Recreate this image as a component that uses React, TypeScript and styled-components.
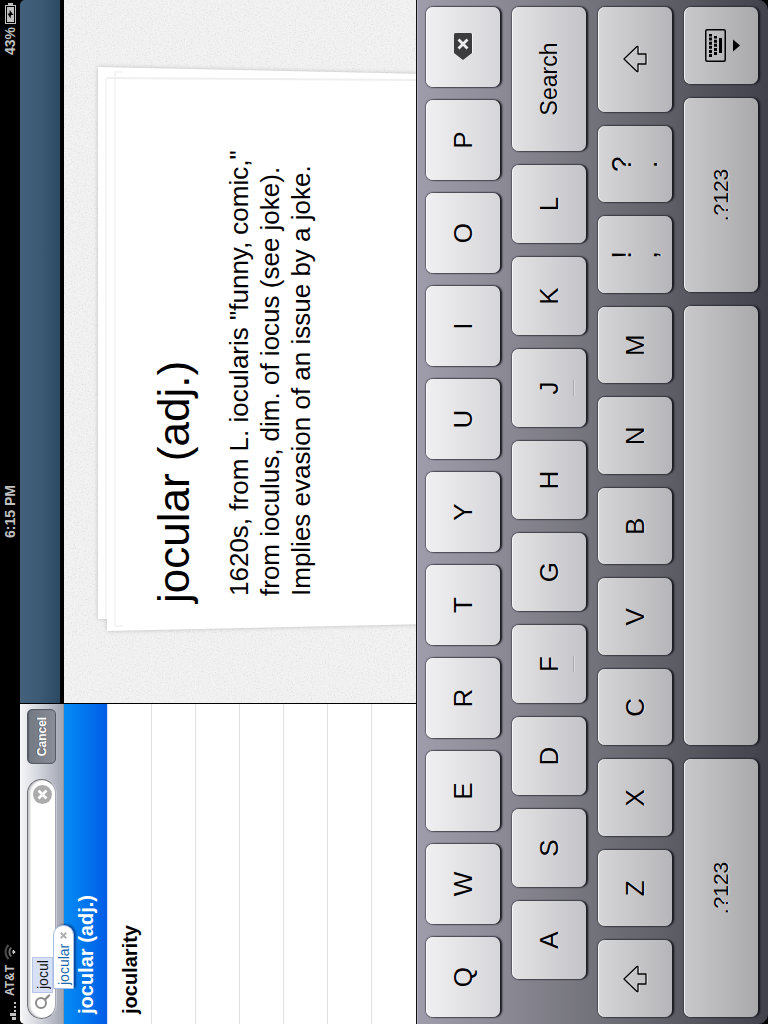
import React from "react";
import styled, { createGlobalStyle, css } from "styled-components";

const GlobalStyle = createGlobalStyle`
  *, *::before, *::after { box-sizing: border-box; }
  body {
    margin: 0;
    background: #000;
    font-family: "Liberation Sans", Arial, Helvetica, sans-serif;
  }
  button, input { font: inherit; border: 0; padding: 0; margin: 0; }
  h1, p, ul { margin: 0; padding: 0; font-weight: normal; }
`;

const Stage = styled.div`
  width: 100%;
  height: 100vh;
  overflow: hidden;
`;

/* A landscape device held on its side: the whole screen is turned a quarter. */
const Device = styled.div`
  display: flex;
  flex-direction: column;
  width: 100vh;
  height: 100vw;
  background: #000;
  transform-origin: 0 0;
  transform: translateY(100vh) rotate(-90deg);
`;

const StatusBar = styled.header`
  display: grid;
  grid-template-columns: 1fr auto 1fr;
  align-items: center;
  height: 20px;
  padding: 0 3px 0 4px;
  color: #c2c2c2;
  font-size: 14px;
  line-height: 18px;
  font-weight: bold;
`;

const StatusGroup = styled.div<{ $end?: boolean }>`
  display: flex;
  align-items: center;
  justify-content: ${(p) => (p.$end ? "flex-end" : "flex-start")};
  gap: ${(p) => (p.$end ? 3 : 5)}px;
`;

const Carrier = styled.span`
  font-size: 12px;
`;

const Split = styled.main`
  display: flex;
  flex: 1;
  min-height: 0;
`;

const Sidebar = styled.aside`
  display: flex;
  flex-direction: column;
  width: 320px;
  background: #fff;
  border-top-left-radius: 5px;
`;

const SearchBar = styled.form`
  display: flex;
  align-items: center;
  gap: 15px;
  height: 44px;
  padding: 0 5px;
  border-top-left-radius: 5px;
  border-bottom: 1px solid #8f94a1;
  background: linear-gradient(#f6f7f9, #cfd2d9 48%, #a2a5b2);
`;

const SearchField = styled.label`
  position: relative;
  display: flex;
  flex: 1;
  align-items: center;
  height: 29px;
  padding: 2px 5px 0 8px;
  border: 1px solid #6e7077;
  border-bottom-color: #a5a8b2;
  border-radius: 15px;
  background: #fff;
  box-shadow: inset 0 2px 2px #c4c4c8, 0 1px 0 #c6c9d2;
`;

const Query = styled.input`
  field-sizing: content;
  height: 19px;
  margin: 0 auto 0 2px;
  padding: 0 2px 0 3px;
  background: #d8e0f5;
  box-shadow: 0 0 0 1px #b9c6ea;
  color: #111;
  font-size: 14px;
  outline: none;
`;

const ClearButton = styled.button`
  display: flex;
  width: 19px;
  height: 19px;
  background: none;
`;

const Suggestion = styled.button`
  position: absolute;
  z-index: 2;
  top: 25px;
  left: 29px;
  display: flex;
  align-items: center;
  gap: 5px;
  height: 21px;
  padding: 0 6px 0 3px;
  border: 1px solid #a9bfe6;
  border-radius: 1px 10px 10px 1px;
  background: #fff;
  box-shadow: 1px 2px 2px rgba(0, 20, 80, 0.5);
  color: #1b66ad;
  font-size: 14px;
  line-height: 18px;
`;

const CancelButton = styled.button`
  width: 55px;
  height: 29px;
  border: 1px solid #565a63;
  border-radius: 5px;
  background: linear-gradient(#737982, #7d828c 50%, #898d97);
  box-shadow: inset 0 1px 1px #565b64;
  color: #fff;
  font-size: 12px;
  font-weight: bold;
  text-shadow: 0 -1px 0 #50545c;
`;

const Results = styled.ul`
  flex: 1;
  min-height: 0;
  overflow: hidden;
  list-style: none;
`;

const Result = styled.li<{ $selected?: boolean }>`
  height: 44px;
  padding-left: 10px;
  border-bottom: 1px solid #dfdfdf;
  font-size: 20px;
  line-height: 44px;
  font-weight: bold;
  ${(p) =>
    p.$selected &&
    css`
      border-bottom-color: #cfe0fa;
      background: linear-gradient(#058cf5, #015de6);
      color: #fff;
    `}
`;

const Detail = styled.section`
  display: flex;
  flex: 1;
  flex-direction: column;
  min-width: 0;
  border-left: 1px solid #000;
`;

const NavBar = styled.div`
  height: 40px;
  margin-bottom: 4px;
  border-top-right-radius: 5px;
  background: linear-gradient(#43607c, #3d5a75 50%, #2b4a62);
`;

const Desk = styled.div`
  position: relative;
  flex: 1;
  min-height: 0;
  overflow: hidden;
  padding: 34px 67px 0 72px;
  background: #f4f4f4;
`;

const Grain = styled.svg`
  position: absolute;
  inset: 0;
  width: 100%;
  height: 100%;
  opacity: 0.06;
`;

const Card = styled.article`
  position: relative;
  height: 318px;
  padding: 51px 40px 0 28px;
`;

const Paper = styled.svg`
  position: absolute;
  inset: 0;
  width: 100%;
  height: 100%;
  overflow: visible;
  filter: drop-shadow(0 0 2px rgba(0, 0, 0, 0.22));
`;

const Headword = styled.h1`
  position: relative;
  font-size: 44px;
  line-height: 50px;
`;

const Definition = styled.p`
  position: relative;
  margin-top: 25px;
  padding-left: 7px;
  font-size: 26px;
  line-height: 31px;
`;

const KeyboardPanel = styled.section`
  display: flex;
  flex-direction: column;
  gap: 12px;
  padding: 9px 7px 10px;
  border-top: 1px solid #111;
  border-radius: 0 0 10px 10px;
  background: linear-gradient(#9f9dab, #86858f 30%, #62626a 68%, #41414c);
  box-shadow: inset 0 1px 0 #b4b3bf;
`;

const KeyRow = styled.div<{ $gap?: number; $indent?: number }>`
  display: flex;
  gap: ${(p) => p.$gap ?? 14}px;
  padding-left: ${(p) => p.$indent ?? 0}px;
`;

const faces = [
  ["#f0f0f2", "#d6d6da"],
  ["#e3e3e5", "#c3c3c8"],
  ["#d6d6d8", "#b6b6ba"],
  ["#c9c9cb", "#a9a9ac"],
];

const Key = styled.button<{ $row: number; $width?: number }>`
  position: relative;
  display: flex;
  flex: ${(p) => (p.$width ? `0 0 ${p.$width}px` : "1 1 0")};
  flex-direction: column;
  align-items: center;
  justify-content: center;
  min-width: 0;
  height: 74px;
  border-radius: 7px;
  background: linear-gradient(${(p) => faces[p.$row].join(", ")});
  box-shadow: inset 0 1px 0 rgba(255, 255, 255, 0.75),
    0 0 1px 1px rgba(40, 40, 50, 0.5), 0 2px 2px #111118;
  color: #000;
  font-size: 26px;
  line-height: 26px;
  text-shadow: 0 1px 0 rgba(255, 255, 255, 0.7);
`;

const Mark = styled.span`
  font-size: 28px;
`;

const WordLabel = styled.span<{ $small?: boolean }>`
  font-size: ${(p) => (p.$small ? 21 : 23)}px;
`;

const HomeBump = styled.i`
  position: absolute;
  bottom: 12px;
  width: 16px;
  height: 1px;
  background: #a9a9ae;
  box-shadow: 0 1px 0 #dcdce0;
`;

const SignalIcon = () => (
  <svg width="19" height="12" fill="#c2c2c2" aria-hidden="true">
    <rect x="0" y="8" width="3" height="4" />
    <rect x="4" y="6" width="3" height="6" />
    <rect x="8" y="10" width="2" height="2" />
    <rect x="12" y="10" width="2" height="2" />
    <rect x="16" y="10" width="2" height="2" />
  </svg>
);

const WifiIcon = () => (
  <svg width="16" height="12" viewBox="0 0 16 12" fill="none" strokeWidth="2" aria-hidden="true">
    <path d="M1 4.5a10 10 0 0 1 14 0" stroke="#4b4b4b" />
    <path d="M3.6 7.2a6.2 6.2 0 0 1 8.8 0" stroke="#6b6b6b" />
    <path d="M8 11.6 5.8 9.4a3.1 3.1 0 0 1 4.4 0z" fill="#d0d0d0" />
  </svg>
);

const BatteryIcon = () => (
  <svg width="21" height="11" viewBox="0 0 21 11" aria-hidden="true">
    <rect x="0.5" y="0.5" width="18" height="10" fill="none" stroke="#c2c2c2" />
    <rect x="2" y="2" width="15" height="7" fill="#c2c2c2" />
    <rect x="19" y="3" width="2" height="5" fill="#c2c2c2" />
    <path d="M5.500 5.500 10.500 2.500v2l3.500.2-5 3.800v-2.500z" fill="#000" />
  </svg>
);

const MagnifierIcon = () => (
  <svg width="16" height="17" viewBox="0 0 16 17" fill="none" stroke="#8b8b8b" aria-hidden="true">
    <circle cx="7" cy="7" r="5" strokeWidth="2" />
    <path d="m10.500 11 4 4" strokeWidth="2.400" strokeLinecap="round" />
  </svg>
);

const ClearIcon = () => (
  <svg width="19" height="19" viewBox="0 0 19 19" aria-hidden="true">
    <circle cx="9.500" cy="9.500" r="9.500" fill="#ababab" />
    <path d="m5.500 5.500 8 8m0-8-8 8" stroke="#fff" strokeWidth="2.600" />
  </svg>
);

const DismissIcon = () => (
  <svg width="7" height="7" viewBox="0 0 7 7" stroke="#b0b0b0" strokeWidth="2" aria-hidden="true">
    <path d="m.7.7 5.600 5.600m0-5.600L.7 6.300" />
  </svg>
);

const BackspaceIcon = () => (
  <svg width="27" height="19" viewBox="0 0 27 19" aria-hidden="true">
    <path d="M0 9 7 0h18.500q1.500 0 1.500 1.500v15q0 1.500-1.500 1.500H7z" fill="#3c3c3e" />
    <path d="M7 18.500H26" stroke="#f6f6f8" />
    <path d="m11.500 4.500 9 9m0-9-9 9" stroke="#ededf0" strokeWidth="2.800" />
  </svg>
);

const ShiftIcon = () => (
  <svg width="28" height="25" viewBox="0 0 28 25" fill="none" strokeLinejoin="round" aria-hidden="true">
    <path d="M14 2 26.500 15q.5 1-.5 1h-7v8H9v-8H2q-1 0-.5-1z" stroke="#f0f0f2" />
    <path d="M14 1 26.500 14q.5 1-.5 1h-7v8H9v-8H2q-1 0-.5-1z" stroke="#000" strokeWidth="1.300" />
  </svg>
);

const HideKeyboardIcon = () => (
  <svg width="33" height="40" viewBox="0 -4 33 40" aria-hidden="true">
    <rect x="0.75" y="0.75" width="31.500" height="19.500" rx="1.500" fill="none" stroke="#000" strokeWidth="1.500" />
    <g stroke="#000" strokeWidth="3" strokeDasharray="3 1.100">
      <path d="M5 5.500h23" />
      <path d="M7 10.500h19" />
    </g>
    <rect x="9" y="14" width="15" height="3" />
    <path d="M10.500 28h12l-6 7z" />
  </svg>
);

export default function App() {
  return (
    <Stage>
      <GlobalStyle />
      <Device>
        <StatusBar>
          <StatusGroup>
            <SignalIcon />
            <Carrier>AT&amp;T</Carrier>
            <WifiIcon />
          </StatusGroup>
          <span>6:15 PM</span>
          <StatusGroup $end>
            <span>43%</span>
            <BatteryIcon />
          </StatusGroup>
        </StatusBar>

        <Split>
          <Sidebar>
            <SearchBar onSubmit={(e) => e.preventDefault()}>
              <SearchField>
                <MagnifierIcon />
                <Query type="text" aria-label="Search" defaultValue="jocul" />
                <ClearButton type="button" aria-label="Clear">
                  <ClearIcon />
                </ClearButton>
                <Suggestion type="button">
                  jocular
                  <DismissIcon />
                </Suggestion>
              </SearchField>
              <CancelButton type="button">Cancel</CancelButton>
            </SearchBar>
            <Results>
              <Result $selected>jocular (adj.)</Result>
              <Result>jocularity</Result>
              {[0, 1, 2, 3, 4].map((n) => (
                <Result key={n} aria-hidden="true" />
              ))}
            </Results>
          </Sidebar>

          <Detail>
            <NavBar />
            <Desk>
              <Grain aria-hidden="true">
                <filter id="grain">
                  <feTurbulence type="fractalNoise" baseFrequency="0.7" numOctaves="2" />
                  <feColorMatrix
                    type="matrix"
                    values="2 0 0 0 -0.5  2 0 0 0 -0.5  2 0 0 0 -0.5  0 0 0 0 1"
                  />
                </filter>
                <rect width="100%" height="100%" filter="url(#grain)" />
              </Grain>
              <Card>
                <Paper viewBox="0 0 564 318" preserveAspectRatio="none" aria-hidden="true">
                  <path d="M12 0H564L557 330H12z" fill="#fff" />
                  <path d="M0 9H20V330H7z" fill="#fff" />
                  <g fill="none" stroke="#f5f5f5" strokeWidth="2">
                    <path d="M13 8H553" />
                    <path d="M5 25V17H559V25" />
                    <path d="M553 9 551 318" stroke="#efefef" />
                  </g>
                </Paper>
                <Headword>jocular (adj.)</Headword>
                <Definition>
                  1620s, from L. iocularis "funny, comic,"
                  <br />
                  from ioculus, dim. of iocus (see joke).
                  <br />
                  Implies evasion of an issue by a joke.
                </Definition>
              </Card>
            </Desk>
          </Detail>
        </Split>

        <KeyboardPanel aria-label="Keyboard">
          <KeyRow $gap={13}>
            {[..."QWERTYUIOP"].map((c) => (
              <Key key={c} $row={0}>{c}</Key>
            ))}
            <Key $row={0} aria-label="Backspace">
              <BackspaceIcon />
            </Key>
          </KeyRow>
          <KeyRow $indent={38}>
            {[..."ASDFGHJKL"].map((c) => (
              <Key key={c} $row={1}>
                {c}
                {(c === "F" || c === "J") && <HomeBump />}
              </Key>
            ))}
            <Key $row={1} $width={144}>
              <WordLabel>Search</WordLabel>
            </Key>
          </KeyRow>
          <KeyRow>
            <Key $row={2} aria-label="Shift">
              <ShiftIcon />
            </Key>
            {[..."ZXCVBNM"].map((c) => (
              <Key key={c} $row={2}>{c}</Key>
            ))}
            <Key $row={2}>
              <Mark>!</Mark>
              <Mark>,</Mark>
            </Key>
            <Key $row={2}>
              <Mark>?</Mark>
              <Mark>.</Mark>
            </Key>
            <Key $row={2} $width={105} aria-label="Shift">
              <ShiftIcon />
            </Key>
          </KeyRow>
          <KeyRow>
            <Key $row={3} $width={258}>
              <WordLabel $small>.?123</WordLabel>
            </Key>
            <Key $row={3} aria-label="Space" />
            <Key $row={3} $width={194}>
              <WordLabel $small>.?123</WordLabel>
            </Key>
            <Key $row={3} $width={77} aria-label="Hide keyboard">
              <HideKeyboardIcon />
            </Key>
          </KeyRow>
        </KeyboardPanel>
      </Device>
    </Stage>
  );
}
